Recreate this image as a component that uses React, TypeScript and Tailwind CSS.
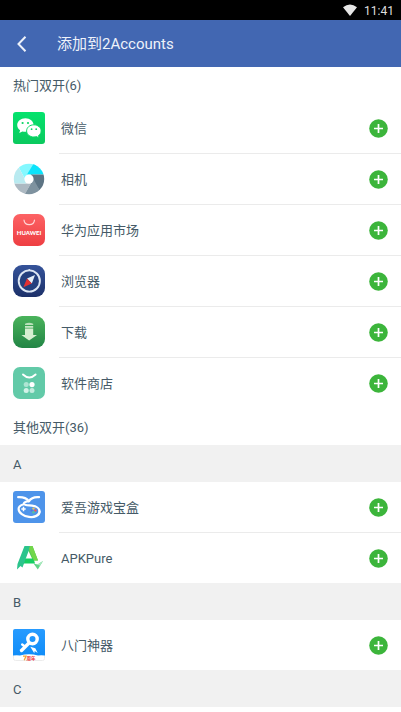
import type { ReactNode } from 'react';

type AppEntry = {
  name: string;
  icon: ReactNode;
};

function WeChatIcon() {
  return (
    <svg viewBox="0 0 32 32" className="w-8 h-8">
      <defs>
        <linearGradient id="wechat" x1="0" y1="0" x2="0" y2="1">
          <stop offset="0" stopColor="#04e36d" />
          <stop offset="1" stopColor="#0bc95e" />
        </linearGradient>
      </defs>
      <rect width="32" height="32" rx="3" fill="url(#wechat)" />
      <path d="M12.4 6.2c-4.6 0-8.2 3-8.2 6.8 0 2.1 1.1 4 2.9 5.2l-.8 2.700 3.100-1.500c1 .3 2 .4 3 .4 4.600 0 8.200-3 8.200-6.800s-3.600-6.800-8.200-6.800z" fill="#fff" />
      <path d="M20.900 12.800c-4.100 0-7.300 2.700-7.300 6.100s3.200 6.100 7.300 6.100c.9 0 1.800-.1 2.600-.4l2.600 1.400-.6-2.400c1.600-1.100 2.600-2.800 2.600-4.700 0-3.400-3.200-6.100-7.200-6.100z" fill="#fff" stroke="#08d865" strokeWidth="1" />
      <circle cx="9.600" cy="11" r="1.100" fill="#09d564" />
      <circle cx="15" cy="11" r="1.100" fill="#09d564" />
      <circle cx="18.600" cy="17.200" r=".9" fill="#09d564" />
      <circle cx="23.200" cy="17.200" r=".9" fill="#09d564" />
    </svg>
  );
}

function CameraIcon() {
  return (
    <svg viewBox="0 0 32 32" className="w-8 h-8">
      <defs>
        <clipPath id="lens">
          <circle cx="16" cy="16" r="15.200" />
        </clipPath>
      </defs>
      <g clipPath="url(#lens)">
        <path d="M-1 0H24L18 16H12L5.500 4z" fill="#84f8ff" />
        <path d="M14 11.500L21 0H34V11.500z" fill="#0be3fb" />
        <path d="M18 11.500H34V20L27 28 18.500 16z" fill="#5d7484" />
        <path d="M20.500 16L27 28 17 33 11 32 18 20z" fill="#7e929f" />
        <path d="M18 20.500L11.500 32 3 27-1 20.500z" fill="#adb9c2" />
        <path d="M13 20.500H-1V10L5.500 4 12 16z" fill="#b9eaf0" />
      </g>
      <circle cx="16" cy="16" r="4.600" fill="#fff" />
    </svg>
  );
}

function HuaweiIcon() {
  return (
    <svg viewBox="0 0 32 32" className="w-8 h-8">
      <defs>
        <linearGradient id="huawei" x1="0" y1="0" x2="0" y2="1">
          <stop offset="0" stopColor="#fd6365" />
          <stop offset="1" stopColor="#ee3e42" />
        </linearGradient>
      </defs>
      <rect width="32" height="32" rx="7" fill="url(#huawei)" />
      <path d="M11 6c.5 6.200 10 6.200 10.500 0" fill="none" stroke="#ffd5d5" strokeWidth="1.200" strokeLinecap="round" />
      <text x="16" y="21" textAnchor="middle" fontSize="6" fontWeight="900" fill="#fff" className="font-['Lato',sans-serif]">
        HUAWEI
      </text>
    </svg>
  );
}

function BrowserIcon() {
  return (
    <svg viewBox="0 0 32 32" className="w-8 h-8">
      <defs>
        <linearGradient id="browser" x1="0" y1="0" x2="0" y2="1">
          <stop offset="0" stopColor="#35539a" />
          <stop offset="1" stopColor="#1c3069" />
        </linearGradient>
      </defs>
      <rect width="32" height="32" rx="9" fill="url(#browser)" />
      <circle cx="16.300" cy="16" r="10.600" fill="#24407e" stroke="#dde7f4" strokeWidth="1.900" />
      <circle cx="16.300" cy="4.900" r="1" fill="#dde7f4" />
      <path d="M22 10l-3.200 8.500-4.800-5z" fill="#e6f0f8" />
      <path d="M10.400 22.200l3.600-8.700 4.800 5z" fill="#e32f31" />
    </svg>
  );
}

function DownloadIcon() {
  return (
    <svg viewBox="0 0 32 32" className="w-8 h-8">
      <defs>
        <linearGradient id="download" x1="0" y1="0" x2="0" y2="1">
          <stop offset="0" stopColor="#4ab35b" />
          <stop offset="1" stopColor="#228545" />
        </linearGradient>
      </defs>
      <rect width="32" height="32" rx="9" fill="url(#download)" />
      <path d="M12 7.800Q16 5.800 20.200 7.800V9H12z" fill="#b9e0b9" />
      <path d="M12 10h8.200v1.800H12z" fill="#c7e7c5" />
      <path d="M12 12.600h8.200V19H24l-7.900 5.600L8.400 19H12z" fill="#d5efd0" />
    </svg>
  );
}

function StoreIcon() {
  return (
    <svg viewBox="0 0 32 32" className="w-8 h-8">
      <rect width="32" height="32" rx="7" fill="#62caa8" />
      <path d="M10 7.500q6.300 6 12.600 0" fill="none" stroke="#fff" strokeWidth="1.900" strokeLinecap="round" />
      <circle cx="13.200" cy="17.600" r="2.500" fill="#aee5d3" />
      <circle cx="19" cy="17.600" r="2.600" fill="#fff" />
      <circle cx="13.200" cy="23.400" r="2.500" fill="#d3f2e8" />
      <circle cx="19" cy="23.400" r="2.500" fill="#c3ecde" />
    </svg>
  );
}

function GameBoxIcon() {
  return (
    <svg viewBox="0 0 32 32" className="w-8 h-8">
      <rect width="32" height="32" rx="3" fill="#4e94ea" />
      <g fill="none" stroke="#fff" strokeLinecap="round" strokeLinejoin="round">
        <path d="M5.200 6.200c4-.2 8.300.8 10.800 4 2-3.200 5.500-4.400 10-4" strokeWidth="2.300" />
        <path d="M16 10.200c-2.500.2-5.500 1-5 2.700.6 1.700 4.500 1.300 8 1.700 4.500.5 8 3 7.600 6.600-.6 4-5.600 5.300-10.600 4.700C10.500 25.300 5.700 22 5.600 18c0-2.200 1.600-3.700 4.400-4.500" strokeWidth="2.200" />
      </g>
      <path d="M25.500 18c1 5-4 7.500-10 7.300 6 2.700 12-.3 12-5z" fill="#fff" />
      <path d="M10.500 15.800v4.400M8.300 18h4.400" stroke="#fff" strokeWidth="1.500" />
      <circle cx="20.500" cy="17.600" r="1.200" fill="#e8c35b" />
      <circle cx="22.400" cy="19.500" r="1.200" fill="#e65a65" />
      <circle cx="18.600" cy="19.500" r="1.100" fill="#5875d8" />
      <circle cx="20.500" cy="21.300" r="1.200" fill="#5cc496" />
    </svg>
  );
}

function ApkPureIcon() {
  return (
    <svg viewBox="0 0 32 32" className="w-8 h-8">
      <path d="M12 4h7.500L25 18.500h-5L15.500 9z" fill="#52cb50" />
      <path d="M11.800 16.500h8.700l1.500 5H9.500z" fill="#16cf62" />
      <path d="M11.500 4h6L13 16 9.500 25.500l-2-1.500L4 27.500 4.500 22z" fill="#2bc48c" />
      <path d="M16.800 4h2.700L25 18.500h-4.200L16 7z" fill="#72d64b" />
      <path d="M20.500 21.500l4 1 5.500-3.500-5.200 8.500z" fill="#5ed487" />
      <path d="M24.500 22.500l5.500-3.500-3 4.800z" fill="#a9e9be" />
    </svg>
  );
}

function KeyIcon() {
  return (
    <svg viewBox="0 0 32 32" className="w-8 h-8">
      <defs>
        <linearGradient id="key" x1="0" y1="0" x2="0" y2="1">
          <stop offset="0" stopColor="#279bff" />
          <stop offset="1" stopColor="#118df8" />
        </linearGradient>
      </defs>
      <rect x=".5" y=".5" width="31" height="31" rx="2" fill="#fff" stroke="#ececec" />
      <path d="M2 0h28a2 2 0 0 1 2 2v24.500q-4-.5-7 0-9-2.500-18 0-3-.5-7 0V2a2 2 0 0 1 2-2z" fill="url(#key)" />
      <g fill="none" stroke="#fff" strokeLinecap="round">
        <circle cx="19.500" cy="10" r="4.700" strokeWidth="3.400" />
        <path d="M15.500 14.500L8.500 21.500" strokeWidth="3.400" />
        <path d="M11.500 17.200l-2.300-1.700" strokeWidth="2.400" />
      </g>
      <path d="M17.300 17.800l5 1.500 2.400 4.700-3-2-.4 2.200z" fill="#fff" />
      <path d="M10 27.200h3L11.200 31.300" fill="none" stroke="#f7a334" strokeWidth="1.300" />
      <text x="18" y="31.200" textAnchor="middle" fontSize="4.500" fontWeight="700" fill="#ef3434">
        周年
      </text>
    </svg>
  );
}

const popularApps: AppEntry[] = [
  { name: '微信', icon: <WeChatIcon /> },
  { name: '相机', icon: <CameraIcon /> },
  { name: '华为应用市场', icon: <HuaweiIcon /> },
  { name: '浏览器', icon: <BrowserIcon /> },
  { name: '下载', icon: <DownloadIcon /> },
  { name: '软件商店', icon: <StoreIcon /> },
];

const otherApps: { letter: string; apps: AppEntry[] }[] = [
  {
    letter: 'A',
    apps: [
      { name: '爱吾游戏宝盒', icon: <GameBoxIcon /> },
      { name: 'APKPure', icon: <ApkPureIcon /> },
    ],
  },
  { letter: 'B', apps: [{ name: '八门神器', icon: <KeyIcon /> }] },
  { letter: 'C', apps: [] },
];

function AppList({ apps }: { apps: AppEntry[] }) {
  return (
    <ul>
      {apps.map((app) => (
        <li key={app.name} className="group flex items-stretch pl-[13px]">
          <div className="flex items-center h-[50px] w-[46px] shrink-0">{app.icon}</div>
          <div className="flex flex-1 items-center justify-between h-[51px] pl-[2px] pr-[13px] border-b border-[#ebebeb] group-last:h-[50px] group-last:border-b-0">
            <span className="pt-0.5">{app.name}</span>
            <button type="button" aria-label={`添加 ${app.name}`} className="rounded-full">
              <svg viewBox="0 0 19 19" className="w-[19px] h-[19px]">
                <circle cx="9.500" cy="9.500" r="9.300" fill="#3cb53b" />
                <path d="M9.500 5v9M5 9.500h9" stroke="#fff" strokeWidth="1.700" />
              </svg>
            </button>
          </div>
        </li>
      ))}
    </ul>
  );
}

export default function App() {
  return (
    <div className="min-h-screen bg-white text-[13px] leading-5 text-[#455a67] font-['Roboto','Noto_Sans_CJK_SC',sans-serif]">
      <div className="h-5 bg-black flex items-center justify-end gap-[6px] pr-[7px] text-[12px] text-[#dedede]">
        <svg viewBox="0 0 16 13" className="w-4 h-[13px]">
          <path d="M1 3.200Q8-2 15 3.200L8 12z" fill="#e6e6e6" />
        </svg>
        <span className="pt-0.5">11:41</span>
      </div>

      <header className="h-[47px] bg-[#4267b2] flex items-center pl-3 gap-[25px] text-[#eef2fa]">
        <button type="button" aria-label="返回" className="w-5 h-5">
          <svg viewBox="0 0 20 20" className="w-5 h-5" fill="none" stroke="currentColor" strokeWidth="2">
            <path d="M13.500 2.800L6.500 10l7 7.200" />
          </svg>
        </button>
        <h1 className="text-[15px]">添加到2Accounts</h1>
      </header>

      <main>
        <section>
          <h2 className="h-9 flex items-center px-[13px] pt-0.5">热门双开(6)</h2>
          <AppList apps={popularApps} />
        </section>

        <section>
          <h2 className="h-[37px] flex items-center px-[13px] pt-0.5">其他双开(36)</h2>
          {otherApps.map((group) => (
            <div key={group.letter}>
              <h3 className="h-[37px] flex items-center px-[13px] pt-0.5 bg-[#f1f1f1]">{group.letter}</h3>
              <AppList apps={group.apps} />
            </div>
          ))}
        </section>
      </main>
    </div>
  );
}
